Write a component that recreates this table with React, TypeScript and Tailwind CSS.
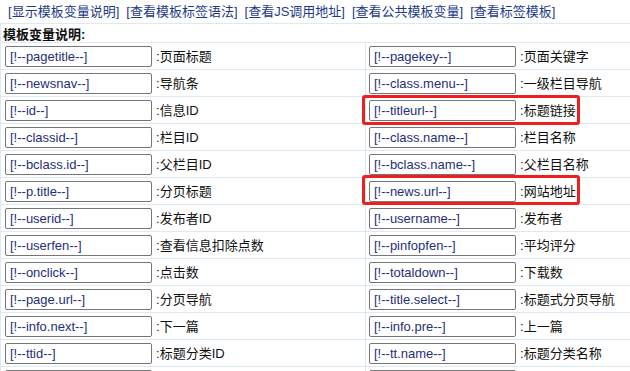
const LINKS = ['显示模板变量说明', '查看模板标签语法', '查看JS调用地址', '查看公共模板变量', '查看标签模板']

const ROWS: [string, string, string, string][] = [
  ['[!--pagetitle--]', '页面标题', '[!--pagekey--]', '页面关键字'],
  ['[!--newsnav--]', '导航条', '[!--class.menu--]', '一级栏目导航'],
  ['[!--id--]', '信息ID', '[!--titleurl--]', '标题链接'],
  ['[!--classid--]', '栏目ID', '[!--class.name--]', '栏目名称'],
  ['[!--bclass.id--]', '父栏目ID', '[!--bclass.name--]', '父栏目名称'],
  ['[!--p.title--]', '分页标题', '[!--news.url--]', '网站地址'],
  ['[!--userid--]', '发布者ID', '[!--username--]', '发布者'],
  ['[!--userfen--]', '查看信息扣除点数', '[!--pinfopfen--]', '平均评分'],
  ['[!--onclick--]', '点击数', '[!--totaldown--]', '下载数'],
  ['[!--page.url--]', '分页导航', '[!--title.select--]', '标题式分页导航'],
  ['[!--info.next--]', '下一篇', '[!--info.pre--]', '上一篇'],
  ['[!--ttid--]', '标题分类ID', '[!--tt.name--]', '标题分类名称'],
]

const cjk = "font-['Liberation_Sans','Noto_Sans_CJK_SC',sans-serif]"

function VarCell({ name, label, left }: { name: string; label: string; left?: boolean }) {
  return (
    <div className={`flex items-start h-[26px] bg-white pt-[3px] ${left ? 'pl-[4px]' : 'pl-[3px]'}`}>
      <input
        readOnly
        value={name}
        className="w-[147px] h-[21px] border border-[#767676] rounded-[2px] px-[4px] text-[13px] text-[#1f2f7a] font-['Liberation_Sans',sans-serif] outline-none"
      />
      <span className="ml-[4px] leading-[21px] text-[13px] text-[#111]">:{label}</span>
    </div>
  )
}

export default function App() {
  return (
    <div className={`relative w-[630px] h-[371px] overflow-hidden bg-white ${cjk}`}>
      {/* top links */}
      <div className="flex gap-[7px] pl-[8px] h-[23px] items-center text-[13px] text-[#1d3a8a]">
        {LINKS.map(l => (
          <a key={l} className="cursor-pointer">[{l}]</a>
        ))}
      </div>

      {/* variable table */}
      <div className="w-[660px] grid grid-cols-[364px_1fr] gap-px bg-[#dbeaf5] p-px">
        <div className="col-span-2 bg-white h-[18px] pl-[2px] pt-[4px] text-[13px] font-bold leading-[14px] text-[#111]">
          模板变量说明:
        </div>
        {ROWS.map(([n1, l1, n2, l2]) => (
          <div key={n1} className="contents">
            <VarCell name={n1} label={l1} left />
            <VarCell name={n2} label={l2} />
          </div>
        ))}
        {/* next row, cut off by the window */}
        <div className="bg-white h-[26px] pt-[3px] pl-[4px]">
          <div className="w-[147px] h-[21px] border border-[#767676] rounded-[2px] bg-white" />
        </div>
        <div className="bg-white h-[26px] pt-[3px] pl-[3px]">
          <div className="w-[147px] h-[21px] border border-[#767676] rounded-[2px] bg-white" />
        </div>
      </div>

      {/* red annotation boxes */}
      <div className="absolute left-[362px] top-[95px] w-[218px] h-[30px] border-[3px] border-[#f01e1e] rounded-[3px]" />
      <div className="absolute left-[362px] top-[175px] w-[218px] h-[30px] border-[3px] border-[#f01e1e] rounded-[3px]" />
    </div>
  )
}
